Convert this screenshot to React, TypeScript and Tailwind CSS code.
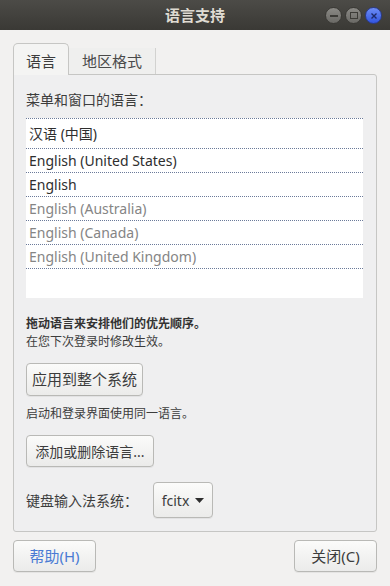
import React from "react";

const rows: { text: string; dim: boolean }[] = [
  { text: "汉语 (中国)", dim: false },
  { text: "English (United States)", dim: false },
  { text: "English", dim: false },
  { text: "English (Australia)", dim: true },
  { text: "English (Canada)", dim: true },
  { text: "English (United Kingdom)", dim: true },
];

const btn =
  "rounded-[4px] border border-[#b9b9b6] bg-gradient-to-b from-[#fbfbfa] to-[#ebebea] text-[#3c3c3c] shadow-[0_1px_0_rgba(0,0,0,0.05)]";

export default function App() {
  return (
    <div className="w-[390px] h-[586px] bg-[#f2f1f0] flex flex-col font-['Noto_Sans','Noto_Sans_CJK_SC',sans-serif] text-[#3c3c3c] overflow-hidden">
      {/* title bar */}
      <div className="h-[30px] bg-gradient-to-b from-[#4c4b47] to-[#3a3935] flex items-center relative">
        <div className="flex-1 text-center text-[15px] font-bold text-[#dfdbd2] leading-none">语言支持</div>
        <div className="absolute right-[8px] top-[7px] flex gap-[3px]">
          <div className="w-[17px] h-[17px] rounded-full bg-gradient-to-b from-[#8a8985] to-[#6a6965] flex items-center justify-center border border-[#3a3935]">
            <div className="w-[8px] h-[2px] bg-[#3c3b37]" />
          </div>
          <div className="w-[17px] h-[17px] rounded-full bg-gradient-to-b from-[#8a8985] to-[#6a6965] flex items-center justify-center border border-[#3a3935]">
            <div className="w-[8px] h-[7px] border-[1.5px] border-[#3c3b37]" />
          </div>
          <div className="w-[17px] h-[17px] rounded-full bg-gradient-to-b from-[#6e8cf5] to-[#3254e0] flex items-center justify-center border border-[#2a3a8a]">
            <svg width="8" height="8" viewBox="0 0 8 8">
              <path d="M1.5 1.5 L6.5 6.5 M6.5 1.5 L1.5 6.5" stroke="#1e2a6a" strokeWidth="1.4" />
            </svg>
          </div>
        </div>
      </div>

      {/* body */}
      <div className="px-[13px] pt-[13px] flex flex-col">
        {/* tabs */}
        <div className="flex items-end h-[31px]">
          <div className="w-[56px] h-[32px] -mb-px relative z-10 border border-[#c6c6c4] border-b-0 rounded-t-[5px] bg-[#f4f4f3] flex items-center justify-center text-[15px] text-[#3c3c3c] pt-[3px]">
            语言
          </div>
          <div className="w-[87px] h-[26px] border-r border-[#d2d2d0] bg-[#efefee] flex items-center justify-center text-[15px] text-[#4a4a4a]">
            地区格式
          </div>
        </div>

        {/* panel */}
        <div className="h-[458px] border border-[#c6c6c4] rounded-b-[3px] rounded-tr-[3px] bg-[#efeff0] pl-[12px] pr-[13px] pt-[15px] flex flex-col">
          <div className="text-[14px] leading-[20px] text-[#3c3c3c]">菜单和窗口的语言：</div>
          <div className="mt-[8px] h-[180px] bg-white flex flex-col">
            {rows.map((r, i) => (
              <div
                key={i}
                className={
                  (i === 0 ? "h-[31px] border-t " : "h-[24px] ") +
                  "border-b border-dotted border-[#6b7a9a] flex items-center pl-[3px] text-[14px] " +
                  (r.dim ? "text-[#858585]" : "text-[#2e2e2e]")
                }
              >
                {r.text}
              </div>
            ))}
          </div>

          <div className="mt-[17px] text-[12px] leading-[18px] font-bold text-[#333]">拖动语言来安排他们的优先顺序。</div>
          <div className="text-[12px] leading-[18px] text-[#3c3c3c]">在您下次登录时修改生效。</div>

          <div className="mt-[12px]">
            <button className={btn + " w-[117px] h-[33px] text-[15px]"}>应用到整个系统</button>
          </div>

          <div className="mt-[9px] text-[12px] leading-[18px] text-[#3c3c3c]">启动和登录界面使用同一语言。</div>

          <div className="mt-[12px]">
            <button className={btn + " w-[128px] h-[32px] text-[14px]"}>添加或删除语言...</button>
          </div>

          <div className="mt-[15px] flex items-center gap-[15px]">
            <div className="text-[14px] text-[#3c3c3c]">键盘输入法系统：</div>
            <button className={btn + " w-[60px] h-[36px] text-[14px] flex items-center justify-center gap-[6px]"}>
              <span>fcitx</span>
              <svg width="9" height="5" viewBox="0 0 9 5">
                <path d="M0 0 L9 0 L4.5 5 Z" fill="#2e2e2e" />
              </svg>
            </button>
          </div>
        </div>

        {/* footer */}
        <div className="mt-[8px] flex justify-between">
          <button className={btn + " w-[83px] h-[32px] text-[15px] !text-[#4a7bd4]"}>帮助(H)</button>
          <button className={btn + " w-[83px] h-[32px] text-[15px]"}>关闭(C)</button>
        </div>
      </div>
    </div>
  );
}
